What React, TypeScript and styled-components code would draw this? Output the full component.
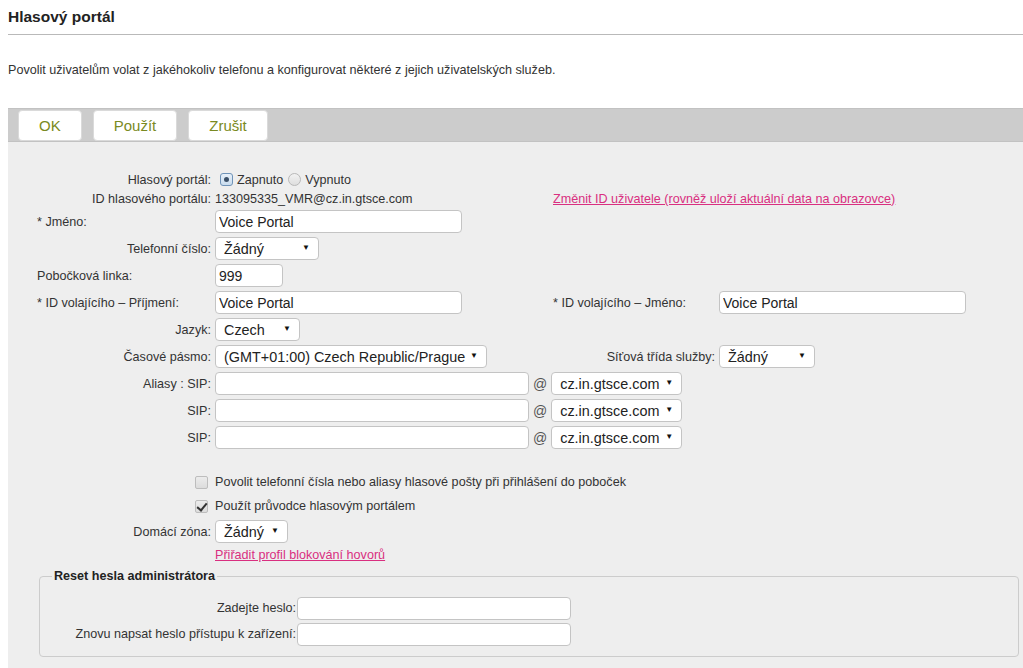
import React from "react";
import styled, { createGlobalStyle } from "styled-components";

const GlobalStyle = createGlobalStyle`
  html, body { padding: 0; background: #ffffff; }
  body {
    margin: 8px 0 0 8px;
    font-family: "Liberation Sans", Arial, sans-serif;
    font-size: 12.6px;
    color: #333333;
    overflow: hidden;
  }
  * { box-sizing: border-box; }
`;

const Title = styled.h1`
  margin: 0;
  font-size: 15.5px;
  line-height: 18px;
  font-weight: bold;
  color: #222222;
  padding-bottom: 8px;
  border-bottom: 1px solid #b9b9b9;
`;

const Description = styled.p`
  margin: 27px 0 0;
  line-height: 16px;
  font-size: 12.6px;
  color: #333333;
`;

const Toolbar = styled.div`
  margin-top: 30px;
  display: flex;
  align-items: flex-end;
  gap: 11px;
  height: 34px;
  padding: 1px 0 0 10px;
  background: #cccccc;
  border-top: 1px solid #c2c2c2;
  border-bottom: 1px solid #c2c2c2;
`;

const ToolButton = styled.button`
  height: 31px;
  padding: 0 20px;
  background: #ffffff;
  border: 1px solid #dadada;
  border-radius: 4px;
  font-family: "Liberation Sans", Arial, sans-serif;
  font-size: 15px;
  color: #7a8a22;
  cursor: pointer;
`;

const Panel = styled.div`
  background: #eeeeee;
  padding: 28px 0 20px;
`;

const FormRow = styled.div<{ $h: number }>`
  display: grid;
  grid-template-columns: 207px 334px 170px 1fr;
  align-items: center;
  height: ${(p) => p.$h}px;
`;

const LabelCell = styled.div<{ $align?: "left" | "right" }>`
  white-space: nowrap;
  line-height: 16px;
  color: #333333;
  text-align: ${(p) => (p.$align === "left" ? "left" : "right")};
  padding: ${(p) => (p.$align === "left" ? "0 0 0 29px" : "0 4px 0 0")};
`;

const SideLabel = styled.div<{ $align?: "left" | "right" }>`
  white-space: nowrap;
  line-height: 16px;
  color: #333333;
  text-align: ${(p) => (p.$align === "left" ? "left" : "right")};
  padding: ${(p) => (p.$align === "left" ? "0 0 0 4px" : "0 4px 0 0")};
`;

const ControlCell = styled.div<{ $span?: number }>`
  display: flex;
  align-items: center;
  white-space: nowrap;
  line-height: 16px;
  grid-column: span ${(p) => p.$span ?? 1};
`;

const CheckCell = styled.div`
  display: flex;
  justify-content: flex-end;
  padding-right: 7px;
`;

const TextInput = styled.input<{ $w: number }>`
  width: ${(p) => p.$w}px;
  height: 23px;
  padding: 0 3px;
  border: 1px solid #c4c4c4;
  border-radius: 4px;
  background: #ffffff;
  font-family: "Liberation Sans", Arial, sans-serif;
  font-size: 14px;
  color: #222222;
  outline: none;
`;

const SelectBox = styled.span<{ $w: number }>`
  position: relative;
  display: inline-flex;
  width: ${(p) => p.$w}px;
  height: 23px;
  &::after {
    content: "▼";
    position: absolute;
    right: 9px;
    top: 6px;
    font-size: 8px;
    line-height: 10px;
    color: #111111;
    pointer-events: none;
  }
`;

const NativeSelect = styled.select`
  appearance: none;
  -webkit-appearance: none;
  width: 100%;
  height: 23px;
  padding: 0 20px 0 8px;
  border: 1px solid #c4c4c4;
  border-radius: 4px;
  background: #ffffff;
  font-family: "Liberation Sans", Arial, sans-serif;
  font-size: 14.4px;
  color: #222222;
  outline: none;
`;

const AtSign = styled.span`
  margin: 0 4px;
  font-size: 14px;
  color: #555555;
`;

const Radio = styled.input.attrs({ type: "radio" })`
  appearance: none;
  -webkit-appearance: none;
  width: 13px;
  height: 13px;
  margin: 0 4px 0 5px;
  border-radius: 50%;
  border: 1px solid #b8b8b8;
  background: linear-gradient(#f2f2f2, #dedede);
  position: relative;
  &:checked {
    border-radius: 3px;
    border-color: #6f93b8;
    background: linear-gradient(#e7f0f9, #c9dcee);
  }
  &:checked::after {
    content: "";
    position: absolute;
    left: 3px;
    top: 3px;
    width: 5px;
    height: 5px;
    border-radius: 50%;
    background: #3b5068;
  }
`;

const Check = styled.input.attrs({ type: "checkbox" })`
  appearance: none;
  -webkit-appearance: none;
  width: 13px;
  height: 13px;
  margin: 0;
  border-radius: 2px;
  border: 1px solid #bdbdbd;
  background: linear-gradient(#ececec, #dcdcdc);
  position: relative;
  &:checked::after {
    content: "";
    position: absolute;
    left: 3px;
    top: 0px;
    width: 4px;
    height: 8px;
    border: solid #333333;
    border-width: 0 2px 2px 0;
    transform: rotate(40deg);
  }
`;

const Link = styled.a`
  color: #d92f80;
  text-decoration: underline;
  white-space: nowrap;
  cursor: pointer;
`;

const Fieldset = styled.fieldset`
  margin: 3px 4px 0 31px;
  padding: 11px 12px 9px;
  border: 1px solid #cccccc;
  border-radius: 4px;
`;

const Legend = styled.legend`
  padding: 0 2px;
  font-weight: bold;
  font-size: 12.6px;
  line-height: 16px;
  color: #222222;
`;

const PwRow = styled.div`
  display: grid;
  grid-template-columns: 245px 1fr;
  align-items: center;
  height: 26px;
`;

const PwLabel = styled.div`
  text-align: right;
  padding-right: 1px;
  white-space: nowrap;
  color: #333333;
`;

type SelProps = { w: number; value: string };
const Select = ({ w, value }: SelProps) => (
  <SelectBox $w={w}>
    <NativeSelect defaultValue={value}>
      <option>{value}</option>
    </NativeSelect>
  </SelectBox>
);

const SipRow = ({ label }: { label: string }) => (
  <FormRow $h={27}>
    <LabelCell>{label}</LabelCell>
    <ControlCell $span={3}>
      <TextInput $w={314} defaultValue="" />
      <AtSign>@</AtSign>
      <Select w={131} value="cz.in.gtsce.com" />
    </ControlCell>
  </FormRow>
);

export default function App() {
  return (
    <>
      <GlobalStyle />
      <Title>Hlasový portál</Title>
      <Description>
        Povolit uživatelům volat z jakéhokoliv telefonu a konfigurovat některé z jejich uživatelských služeb.
      </Description>
      <Toolbar>
        <ToolButton>OK</ToolButton>
        <ToolButton>Použít</ToolButton>
        <ToolButton>Zrušit</ToolButton>
      </Toolbar>
      <Panel>
        <FormRow $h={19}>
          <LabelCell>Hlasový portál:</LabelCell>
          <ControlCell $span={3}>
            <Radio name="vp" defaultChecked />
            Zapnuto
            <Radio name="vp" />
            Vypnuto
          </ControlCell>
        </FormRow>
        <FormRow $h={19}>
          <LabelCell>ID hlasového portálu:</LabelCell>
          <ControlCell>133095335_VMR@cz.in.gtsce.com</ControlCell>
          <ControlCell $span={2}>
            <SideLabel $align="left">
              <Link>Změnit ID uživatele (rovněž uloží aktuální data na obrazovce)</Link>
            </SideLabel>
          </ControlCell>
        </FormRow>
        <FormRow $h={27}>
          <LabelCell $align="left">* Jméno:</LabelCell>
          <ControlCell>
            <TextInput $w={247} defaultValue="Voice Portal" />
          </ControlCell>
        </FormRow>
        <FormRow $h={27}>
          <LabelCell>Telefonní číslo:</LabelCell>
          <ControlCell>
            <Select w={104} value="Žádný" />
          </ControlCell>
        </FormRow>
        <FormRow $h={27}>
          <LabelCell $align="left">Pobočková linka:</LabelCell>
          <ControlCell>
            <TextInput $w={68} defaultValue="999" />
          </ControlCell>
        </FormRow>
        <FormRow $h={27}>
          <LabelCell $align="left">* ID volajícího – Příjmení:</LabelCell>
          <ControlCell>
            <TextInput $w={247} defaultValue="Voice Portal" />
          </ControlCell>
          <SideLabel $align="left">* ID volajícího – Jméno:</SideLabel>
          <ControlCell>
            <TextInput $w={247} defaultValue="Voice Portal" />
          </ControlCell>
        </FormRow>
        <FormRow $h={27}>
          <LabelCell>Jazyk:</LabelCell>
          <ControlCell>
            <Select w={85} value="Czech" />
          </ControlCell>
        </FormRow>
        <FormRow $h={27}>
          <LabelCell>Časové pásmo:</LabelCell>
          <ControlCell>
            <Select w={272} value="(GMT+01:00) Czech Republic/Prague" />
          </ControlCell>
          <SideLabel>Síťová třída služby:</SideLabel>
          <ControlCell>
            <Select w={96} value="Žádný" />
          </ControlCell>
        </FormRow>
        <SipRow label="Aliasy : SIP:" />
        <SipRow label="SIP:" />
        <SipRow label="SIP:" />
        <FormRow $h={19} />
        <FormRow $h={24}>
          <CheckCell>
            <Check />
          </CheckCell>
          <ControlCell $span={3}>
            Povolit telefonní čísla nebo aliasy hlasové pošty při přihlášení do poboček
          </ControlCell>
        </FormRow>
        <FormRow $h={24}>
          <CheckCell>
            <Check defaultChecked />
          </CheckCell>
          <ControlCell $span={3}>Použít průvodce hlasovým portálem</ControlCell>
        </FormRow>
        <FormRow $h={27}>
          <LabelCell>Domácí zóna:</LabelCell>
          <ControlCell>
            <Select w={73} value="Žádný" />
          </ControlCell>
        </FormRow>
        <FormRow $h={20}>
          <div />
          <ControlCell $span={3}>
            <Link>Přiřadit profil blokování hovorů</Link>
          </ControlCell>
        </FormRow>
        <Fieldset>
          <Legend>Reset hesla administrátora</Legend>
          <PwRow>
            <PwLabel>Zadejte heslo:</PwLabel>
            <TextInput $w={274} type="password" />
          </PwRow>
          <PwRow>
            <PwLabel>Znovu napsat heslo přístupu k zařízení:</PwLabel>
            <TextInput $w={274} type="password" />
          </PwRow>
        </Fieldset>
      </Panel>
    </>
  );
}
